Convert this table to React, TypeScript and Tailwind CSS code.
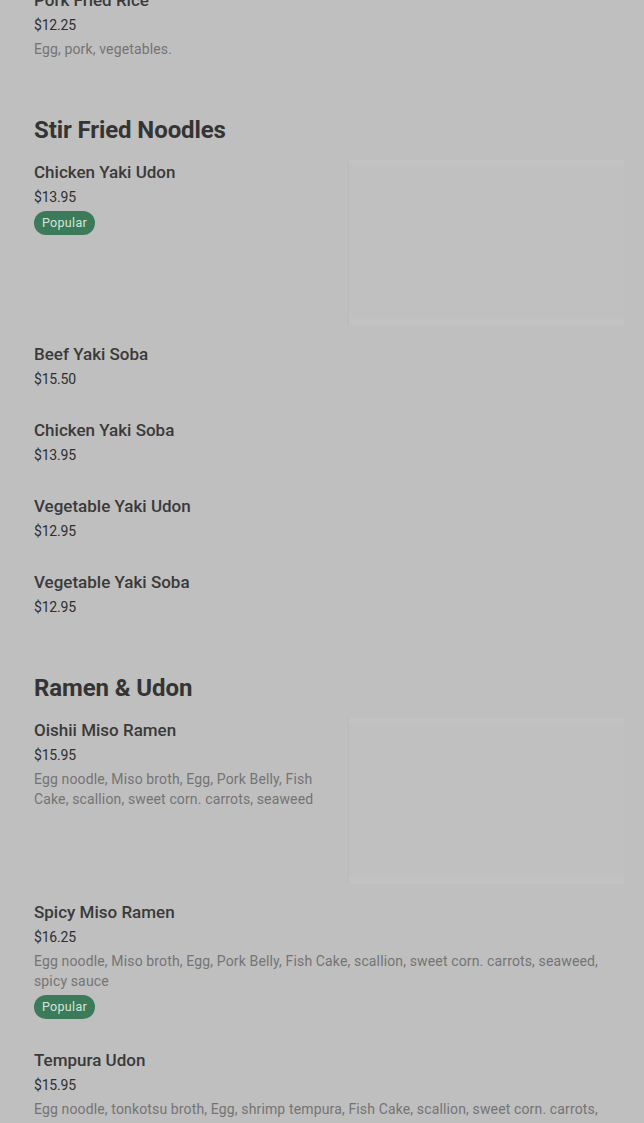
import React from 'react';

interface MenuItem {
  name: string;
  price: string;
  desc?: string;
  popular?: boolean;
  image?: boolean;
}

interface Section {
  title?: string;
  items: MenuItem[];
}

const sections: Section[] = [
  {
    items: [{ name: 'Pork Fried Rice', price: '$12.25', desc: 'Egg, pork, vegetables.' }],
  },
  {
    title: 'Stir Fried Noodles',
    items: [
      { name: 'Chicken Yaki Udon', price: '$13.95', popular: true, image: true },
      { name: 'Beef Yaki Soba', price: '$15.50' },
      { name: 'Chicken Yaki Soba', price: '$13.95' },
      { name: 'Vegetable Yaki Udon', price: '$12.95' },
      { name: 'Vegetable Yaki Soba', price: '$12.95' },
    ],
  },
  {
    title: 'Ramen & Udon',
    items: [
      {
        name: 'Oishii Miso Ramen',
        price: '$15.95',
        desc: 'Egg noodle, Miso broth, Egg, Pork Belly, Fish Cake, scallion, sweet corn. carrots, seaweed',
        image: true,
      },
      {
        name: 'Spicy Miso Ramen',
        price: '$16.25',
        desc: 'Egg noodle, Miso broth, Egg, Pork Belly, Fish Cake, scallion, sweet corn. carrots, seaweed, spicy sauce',
        popular: true,
      },
      {
        name: 'Tempura Udon',
        price: '$15.95',
        desc: 'Egg noodle, tonkotsu broth, Egg, shrimp tempura, Fish Cake, scallion, sweet corn. carrots, seaweed',
      },
    ],
  },
];

const ItemRow: React.FC<{ item: MenuItem }> = ({ item }) => (
  <div className={`flex items-start gap-[28px] ${item.image ? 'pb-[16px]' : 'pb-[29px]'}`}>
    <div className="flex-1 min-w-0">
      <h4 className="text-[17px] leading-[24px] font-medium text-[#3a3a3a]">{item.name}</h4>
      <p className="mt-[3px] text-[14px] leading-[20px] tracking-[-0.2px] text-[#2f2f2f]">{item.price}</p>
      {item.desc && (
        <p className="mt-[4px] text-[14px] leading-[20px] tracking-[0.14px] text-[#747474]">{item.desc}</p>
      )}
      {item.popular && (
        <span className="mt-[4px] inline-flex h-[24px] items-center rounded-full bg-[#3b7b59] px-[8px] text-[12.5px] tracking-[0.3px] text-[#d3e6da]">
          Popular
        </span>
      )}
    </div>
    {item.image && (
      <div className="w-[276px] h-[166px] shrink-0 bg-[#c0c0c0] border-l border-[#bababa] flex flex-col justify-between">
        <div className="h-[5px] bg-[#c2c2c2]" />
        <div className="h-[7px] bg-[#c2c2c2]" />
      </div>
    )}
  </div>
);

export default function App() {
  return (
    <div className="min-h-screen bg-[#bfbfbf] overflow-hidden font-['Roboto','Liberation_Sans',sans-serif]">
      <div className="-mt-[12px] pl-[34px] pr-[20px]">
        {sections.map((section, i) => (
          <div key={i} className={i > 0 ? 'pt-[26px]' : ''}>
            {section.title && (
              <h3 className="mb-[14px] text-[24px] leading-[32px] font-bold tracking-[-0.1px] text-[#343434]">
                {section.title}
              </h3>
            )}
            {section.items.map((item) => (
              <ItemRow key={item.name} item={item} />
            ))}
          </div>
        ))}
      </div>
    </div>
  );
}
